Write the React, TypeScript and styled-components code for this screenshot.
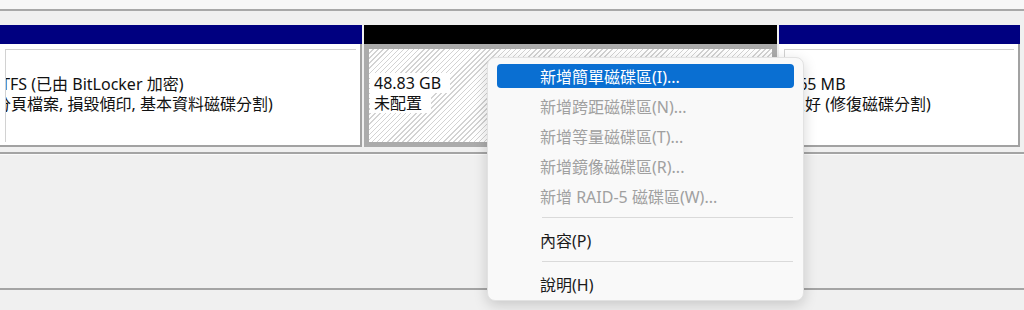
import React from 'react';
import styled, {createGlobalStyle} from 'styled-components';

const GlobalStyle = createGlobalStyle`
  body {
    margin: 0;
    background: #f0f0f0;
    font-family: "Noto Sans", "Noto Sans CJK TC", sans-serif;
    overflow: hidden;
  }
`;

const Screen = styled.div`
  position: relative;
  width: 1024px;
  height: 310px;
  overflow: hidden;
  background: #f0f0f0;
`;

const TopStrip = styled.div`
  height: 9px;
  background: #f7f7f7;
  border-bottom: 2px solid #a8a8a8;
`;

const DiskRow = styled.div`
  display: grid;
  grid-template-columns: 362px 413px 1fr;
  column-gap: 2px;
  padding: 14px 4px 5px 0;
  border-bottom: 2px solid #a4a4a4;
`;

const EmptyRow = styled.div`
  height: 136px;
  border-top: 1px solid #fafafa;
  border-bottom: 2px solid #a4a4a4;
  box-sizing: border-box;
`;

const Partition = styled.div`
  display: flex;
  flex-direction: column;
  height: 122px;
  overflow: hidden;
`;

const Stripe = styled.div<{ $color: string }>`
  height: 19px;
  flex-shrink: 0;
  background: ${p => p.$color};
`;

const Body = styled.div`
  flex: 1;
  display: flex;
  background: #fff;
  padding: 5px 4px 3px 5px;
  border-right: 2px solid #a2a2a2;
  border-bottom: 2px solid #a2a2a2;
`;

const Inset = styled.div`
  flex: 1;
  border-top: 1px solid #d2d2d2;
  border-left: 1px solid #d2d2d2;
  padding: 24px 0 0 4px;
  overflow: hidden;
`;

const HatchBody = styled.div`
  flex: 1;
  border: 5px solid #ababab;
  padding: 24px 0 0 1px;
  background: repeating-linear-gradient(
    135deg,
    #ffffff 0,
    #ffffff 2.6px,
    #d3d3d3 2.6px,
    #d3d3d3 3.6px
  );
`;

const Line = styled.div<{ $shift?: number }>`
  font-size: 16px;
  line-height: 20px;
  color: #111;
  white-space: nowrap;
  margin-left: ${p => p.$shift ?? 0}px;
`;

const Label = styled.span`
  display: inline-block;
  background: #fff;
  padding: 0 9px 0 4px;
`;

const Menu = styled.div`
  position: absolute;
  left: 487px;
  top: 57px;
  width: 317px;
  box-sizing: border-box;
  padding: 3px 0 1px;
  background: #f9f9f9;
  border: 1px solid #e2e2e2;
  border-radius: 8px;
  box-shadow: 0 4px 14px rgba(0, 0, 0, 0.17);
`;

const MenuItem = styled.div`
  padding: 3px 9px;
`;

const ItemLabel = styled.div<{ $active?: boolean; $disabled?: boolean }>`
  height: 24px;
  display: flex;
  align-items: center;
  padding-left: 43px;
  border-radius: 4px;
  font-size: 16px;
  white-space: nowrap;
  background: ${p => (p.$active ? '#0a6fd2' : 'transparent')};
  color: ${p => (p.$active ? '#fff' : p.$disabled ? '#a0a0a0' : '#1b1b1b')};
`;

const Separator = styled.div`
  height: 1px;
  background: #dadada;
  margin: 6px 10px 7px 54px;
`;

type Entry = { text: string; active?: boolean; disabled?: boolean } | 'sep';

const entries: Entry[] = [
    {text: '新增簡單磁碟區(I)...', active: true},
    {text: '新增跨距磁碟區(N)...', disabled: true},
    {text: '新增等量磁碟區(T)...', disabled: true},
    {text: '新增鏡像磁碟區(R)...', disabled: true},
    {text: '新增 RAID-5 磁碟區(W)...', disabled: true},
    'sep',
    {text: '內容(P)'},
    'sep',
    {text: '說明(H)'},
];

const ContextMenu: React.FC = () => (
    <Menu>
        {entries.map((e, i) =>
            e === 'sep' ? (
                <Separator key={i}/>
            ) : (
                <MenuItem key={i}>
                    <ItemLabel $active={e.active} $disabled={e.disabled}>{e.text}</ItemLabel>
                </MenuItem>
            )
        )}
    </Menu>
);

const App: React.FC = () => {
    return (
        <Screen>
            <GlobalStyle/>
            <TopStrip/>
            <DiskRow>
                <Partition>
                    <Stripe $color="#000080"/>
                    <Body>
                        <Inset>
                            <Line $shift={-21}>NTFS (已由 BitLocker 加密)</Line>
                            <Line $shift={-15}>分頁檔案, 損毀傾印, 基本資料磁碟分割)</Line>
                        </Inset>
                    </Body>
                </Partition>
                <Partition>
                    <Stripe $color="#000000"/>
                    <HatchBody>
                        <Line><Label>48.83 GB</Label></Line>
                        <Line><Label>未配置</Label></Line>
                    </HatchBody>
                </Partition>
                <Partition>
                    <Stripe $color="#000080"/>
                    <Body>
                        <Inset>
                            <Line>765 MB</Line>
                            <Line>良好 (修復磁碟分割)</Line>
                        </Inset>
                    </Body>
                </Partition>
            </DiskRow>
            <EmptyRow/>
            <ContextMenu/>
        </Screen>
    );
};

export default App;
